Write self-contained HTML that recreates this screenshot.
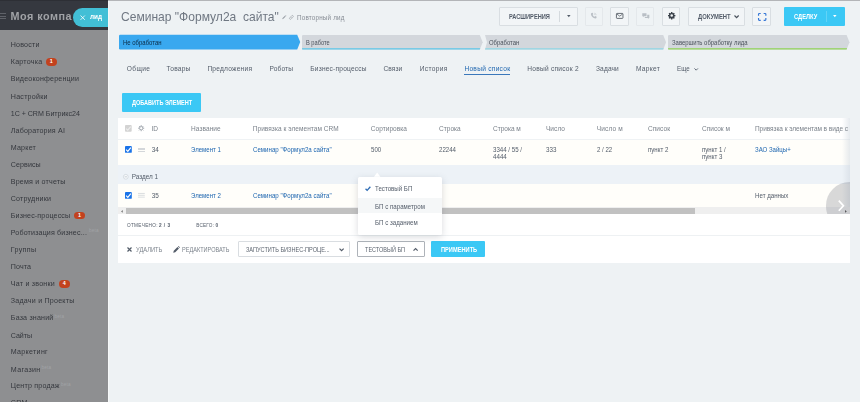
<!DOCTYPE html>
<html lang="ru">
<head>
<meta charset="utf-8">
<title>Семинар "Формул2а сайта"</title>
<style>
html,body{margin:0;padding:0;}
body{width:860px;height:402px;overflow:hidden;background:#eef2f4;font-family:"Liberation Sans",sans-serif;position:relative;}
.a{position:absolute;box-sizing:border-box;}
.t{position:absolute;white-space:pre;font-family:"Liberation Sans",sans-serif;}
svg{position:absolute;overflow:visible;}
.btn{position:absolute;box-sizing:border-box;border:1px solid #d9dee2;background:#f2f5f7;border-radius:1px;}
.btn.dis{border-color:#e4e8eb;background:#eff3f5;}
.badge{position:absolute;background:#c2421e;border-radius:4px;color:#fff;font-size:5.4px;line-height:7.5px;text-align:center;font-weight:700;font-family:"Liberation Sans",sans-serif;}
.beta{position:absolute;font-size:4.7px;line-height:5px;letter-spacing:0.2px;color:#a1a3a6;font-family:"Liberation Sans",sans-serif;}
</style>
</head>
<body>
<!-- domain: Computer-Use -->
<!-- main area top line -->
<div class="a" style="left:0;top:0;width:860px;height:1px;background:#b3b5b8;"></div>

<!-- ===== sidebar ===== -->
<div class="a" style="left:0;top:0;width:108px;height:402px;background:#8e8f91;"></div>
<div class="a" style="left:0;top:0;width:108px;height:30px;background:#35383f;"></div>
<div class="a" style="left:0;top:0;width:108px;height:1px;background:#2d2f35;"></div>
<!-- hamburger -->
<div class="a" style="left:0;top:13px;width:6px;height:1px;background:#5f6269;"></div>
<div class="a" style="left:0;top:15.5px;width:6px;height:1px;background:#5f6269;"></div>
<div class="a" style="left:0;top:18px;width:6px;height:1px;background:#5f6269;"></div>
<!-- lid tab -->
<div class="a" style="left:72.5px;top:8.3px;width:35.5px;height:18.5px;background:#42bfd6;border-radius:9.25px 0 0 9.25px;"></div>
<svg style="left:79.5px;top:14.6px" width="5.4" height="5.4" viewBox="0 0 10 10"><path d="M1 1L9 9M9 1L1 9" stroke="#fff" stroke-width="1.5" fill="none"/></svg>
<!-- badges -->
<div class="badge" style="left:45.5px;top:58.4px;width:11.6px;height:7.5px;">1</div>
<div class="badge" style="left:73.7px;top:211.9px;width:11.5px;height:7.5px;">1</div>
<div class="badge" style="left:58.6px;top:280.1px;width:11.5px;height:7.5px;">4</div>
<div class="beta" style="left:89px;top:228.3px;">beta</div>
<div class="beta" style="left:54.4px;top:313.9px;">beta</div>
<div class="beta" style="left:41.4px;top:364.7px;">beta</div>
<div class="beta" style="left:60.9px;top:381.5px;">beta</div>
<!-- slider edge -->
<div class="a" style="left:108px;top:1px;width:1px;height:401px;background:#f6f8f9;"></div>

<!-- ===== header toolbar ===== -->
<!-- pencil + link icons near title -->
<svg style="left:282px;top:15.4px" width="4.4" height="4.4" viewBox="0 0 10 10"><path d="M0.5 9.5L1.3 6.8L6.6 1.5L8.5 3.4L3.2 8.7Z M7.3 0.8L8.1 0L10 1.9L9.2 2.7Z" fill="#9aa0a7"/></svg>
<svg style="left:289.1px;top:15.3px" width="4.8" height="4.8" viewBox="0 0 10 10"><path d="M4.2 5.8a2 2 0 0 1 0-2.8l1.6-1.6a2 2 0 0 1 2.8 2.8l-1 1M5.8 4.2a2 2 0 0 1 0 2.8l-1.6 1.6a2 2 0 0 1-2.8-2.8l1-1" stroke="#9aa0a7" stroke-width="1.4" fill="none"/></svg>

<div class="btn" style="left:498.8px;top:7px;width:78.8px;height:18.6px;"></div>
<div class="a" style="left:559px;top:10.5px;width:1px;height:11.5px;background:#d5dade;"></div>
<svg style="left:566.6px;top:15.2px" width="3.6" height="2.2" viewBox="0 0 8 5"><path d="M0 0H8L4 5Z" fill="#535c69"/></svg>

<div class="btn dis" style="left:584.5px;top:7px;width:18.4px;height:18.6px;"></div>
<svg style="left:590px;top:12.3px" width="7.4" height="7.4" viewBox="0 0 20 20"><path d="M4.5 2.5L7.3 2L9 6L7 7.6C7.8 9.8 10.2 12.2 12.4 13L14 11L18 12.7L17.5 15.5C17.2 16.9 16 17.8 14.6 17.6C8.4 16.8 3.2 11.6 2.4 5.4C2.2 4 3.1 2.8 4.5 2.5Z" fill="#b9bfc5"/><path d="M11.5 3.2a5.5 5.5 0 0 1 5.3 5.3M11.5 6.2a2.6 2.6 0 0 1 2.3 2.3" stroke="#b9bfc5" stroke-width="1.4" fill="none"/></svg>

<div class="btn" style="left:610.3px;top:7px;width:18.3px;height:18.6px;"></div>
<svg style="left:615.8px;top:13.1px" width="7.4" height="5.8" viewBox="0 0 14 11"><rect x="0.8" y="0.8" width="12.4" height="9.4" rx="1.2" fill="none" stroke="#454c55" stroke-width="1.5"/><path d="M1.6 2L7 6L12.4 2" stroke="#454c55" stroke-width="1.3" fill="none"/></svg>

<div class="btn dis" style="left:636.2px;top:7px;width:18.2px;height:18.6px;"></div>
<svg style="left:641.8px;top:12.8px" width="7.6" height="6.6" viewBox="0 0 16 14"><path d="M0.5 0.5H9.5V7H4L2 9V7H0.5Z" fill="#b9bfc5"/><path d="M11 3.5H15.5V10.5H14V12.5L12 10.5H6V8.3H11Z" fill="#b9bfc5"/></svg>

<div class="btn" style="left:662.2px;top:7px;width:18.2px;height:18.6px;"></div>
<svg style="left:668.1px;top:12.2px" width="7.4" height="7.4" viewBox="0 0 20 20"><path fill="#3b424b" fill-rule="evenodd" d="M8.3 0.8h3.4l0.5 2.6 1.5 0.6 2.2-1.5 2.4 2.4-1.5 2.2 0.6 1.5 2.6 0.5v3.4l-2.6 0.5-0.6 1.5 1.5 2.2-2.4 2.4-2.2-1.5-1.5 0.6-0.5 2.6H8.3l-0.5-2.6-1.5-0.6-2.2 1.5-2.4-2.4 1.5-2.2-0.6-1.5L0 12.5V9.1l2.6-0.5 0.6-1.5L1.7 4.9l2.4-2.4 2.2 1.5 1.5-0.6z M10 6.9a3.5 3.5 0 1 0 0 7a3.5 3.5 0 1 0 0-7z" transform="translate(0 -0.8)"/></svg>

<div class="btn" style="left:688px;top:7px;width:56.6px;height:18.6px;"></div>
<svg style="left:734px;top:15px" width="5.2" height="3.2" viewBox="0 0 10 6"><path d="M1 1L5 5L9 1" stroke="#4b535e" stroke-width="2.4" fill="none"/></svg>

<div class="btn" style="left:752.3px;top:7px;width:18.7px;height:18.6px;"></div>
<svg style="left:757.6px;top:12.5px" width="8.4" height="7.8" viewBox="0 0 17 16"><path d="M1 5.5V2.5Q1 1 2.5 1H5.5 M11.5 1H14.5Q16 1 16 2.5V5.5 M16 10.5V13.5Q16 15 14.5 15H11.5 M5.5 15H2.5Q1 15 1 13.5V10.5" stroke="#3677d6" stroke-width="2.4" fill="none"/></svg>

<div class="a" style="left:784px;top:7px;width:61px;height:18.6px;background:#3bc8f5;border-radius:1px;"></div>
<div class="a" style="left:825.9px;top:10.5px;width:1px;height:11.5px;background:#62d3f7;"></div>
<svg style="left:833.3px;top:15.2px" width="3.6" height="2.2" viewBox="0 0 8 5"><path d="M0 0H8L4 5Z" fill="#fff"/></svg>

<!-- ===== stage bar ===== -->
<svg style="left:0;top:0" width="860" height="60" viewBox="0 0 860 60">
  <path d="M120.2 34.7H297.2L300.2 42L297.2 49.4H120.2Q119 49.4 119 48.2V35.9Q119 34.7 120.2 34.7Z" fill="#39a8ef"/>
  <path d="M303.2 34.9H479.8L482.7 42.2L479.8 49.6H303.2Q302 49.6 302 48.4V36.1Q302 34.9 303.2 34.9Z" fill="#d3d7dc"/>
  <path d="M302 48.3V48.4Q302 49.6 303.2 49.6H479.8L480.3 48.3Z" fill="#5cc6e8"/>
  <path d="M485 34.9H663.2L666.1 42.2L663.2 49.6H485L487 42.2Z" fill="#d3d7dc"/>
  <path d="M485.4 48.3H663.7L663.2 49.6H485Z" fill="#8fd6e4"/>
  <path d="M669.2 34.9H846.6L849.5 42.2L846.6 49.6H669.2Q668 49.6 668 48.4V36.1Q668 34.9 669.2 34.9Z" fill="#d3d7dc"/>
  <path d="M668 48.3V48.4Q668 49.6 669.2 49.6H846.6L847.1 48.3Z" fill="#8fd256"/>
</svg>

<!-- ===== tabs ===== -->
<div class="a" style="left:464.3px;top:74.1px;width:45.8px;height:1.3px;background:#3a78bb;"></div>
<svg style="left:694.4px;top:67.6px" width="4.4" height="2.6" viewBox="0 0 10 6"><path d="M1 1L5 5L9 1" stroke="#535c69" stroke-width="2.1" fill="none"/></svg>

<!-- add button -->
<div class="a" style="left:122.2px;top:93px;width:79.2px;height:18.9px;background:#3bc8f5;border-radius:1px;"></div>

<!-- ===== grid panel ===== -->
<div class="a" style="left:118px;top:118px;width:732px;height:144.8px;background:#fff;"></div>
<div class="a" style="left:118px;top:139px;width:732px;height:1px;background:#eff2f4;"></div>
<div class="a" style="left:118px;top:140px;width:732px;height:25px;background:#fffefa;"></div>
<div class="a" style="left:118px;top:165px;width:732px;height:19px;background:#edf2f7;"></div>
<div class="a" style="left:118px;top:184px;width:732px;height:23px;background:#fffefa;"></div>
<!-- right fade shadow -->
<div class="a" style="left:842px;top:118px;width:8px;height:89.5px;background:linear-gradient(90deg,rgba(215,222,230,0),rgba(205,213,222,0.5));"></div>
<!-- scrollbar -->
<div class="a" style="left:118px;top:207px;width:732px;height:7px;background:#efefef;"></div>
<div class="a" style="left:126px;top:208px;width:569px;height:6px;background:#c1c1c1;"></div>
<svg style="left:121.4px;top:209.6px" width="1.8" height="2.8" viewBox="0 0 4 6"><path d="M4 0V6L0 3Z" fill="#7a7a7a"/></svg>
<svg style="left:845.2px;top:209.6px" width="1.8" height="2.8" viewBox="0 0 4 6"><path d="M0 0V6L4 3Z" fill="#4a4a4a"/></svg>
<!-- next arrow semicircle -->
<div class="a" style="left:818px;top:118px;width:32px;height:96px;overflow:hidden;">
  <div class="a" style="left:8.4px;top:64.4px;width:47.2px;height:47.2px;border-radius:50%;background:rgba(125,130,138,0.3);"></div>
</div>
<svg style="left:837.8px;top:199.8px" width="6.2" height="11.4" viewBox="0 0 6.2 11.4"><path d="M0.8 0.6L5.4 5.7L0.8 10.8" stroke="#fff" stroke-width="1.7" fill="none"/></svg>

<!-- header icons -->
<svg style="left:125.1px;top:124.9px" width="6.7" height="6.7" viewBox="0 0 6.8 6.8"><rect width="6.8" height="6.8" rx="0.9" fill="#d3d3d3"/><path d="M1.1 3.7L2.8 5.3L5.8 1.7" stroke="#ededed" stroke-width="1.1" fill="none"/></svg>
<svg style="left:137.9px;top:125.2px" width="6.4" height="6.4" viewBox="0 0 20 20"><g fill="none" stroke="#9aa0a8"><circle cx="10" cy="10" r="5.2" stroke-width="2.6"/><path d="M10 0.6V4M10 16V19.4M0.6 10H4M16 10H19.4M3.35 3.35L5.8 5.8M14.2 14.2L16.65 16.65M16.65 3.35L14.2 5.8M5.8 14.2L3.35 16.65" stroke-width="3"/></g></svg>

<!-- row 1 icons -->
<svg style="left:125.1px;top:146.3px" width="6.8" height="6.8" viewBox="0 0 6.8 6.8"><rect width="6.8" height="6.8" rx="0.9" fill="#1a73e8"/><path d="M1.1 3.7L2.8 5.3L5.8 1.7" stroke="#fff" stroke-width="1.15" fill="none"/></svg>
<div class="a" style="left:138px;top:147.7px;width:6.6px;height:0.9px;background:#d4d7da;"></div>
<div class="a" style="left:138px;top:149.4px;width:6.6px;height:0.9px;background:#d4d7da;"></div>
<div class="a" style="left:138px;top:151.1px;width:6.6px;height:0.9px;background:#d4d7da;"></div>
<!-- section row icon -->
<svg style="left:122.7px;top:173.9px" width="5.6" height="5.6" viewBox="0 0 10 10"><circle cx="5" cy="5" r="4.3" fill="#f7f9fb" stroke="#ccd3da" stroke-width="1.2"/><path d="M2.9 5H7.1" stroke="#b3bbc4" stroke-width="1.2"/></svg>
<!-- row 2 icons -->
<svg style="left:125.1px;top:191.8px" width="6.8" height="6.8" viewBox="0 0 6.8 6.8"><rect width="6.8" height="6.8" rx="0.9" fill="#1a73e8"/><path d="M1.1 3.7L2.8 5.3L5.8 1.7" stroke="#fff" stroke-width="1.15" fill="none"/></svg>
<svg style="left:138px;top:193px" width="6.8" height="4.6" viewBox="0 0 6.8 4.6"><path d="M0 0.45H6.8M0 2.3H6.8M0 4.15H6.8" stroke="#d2d5d9" stroke-width="0.8" fill="none"/></svg>

<!-- footer divider -->
<div class="a" style="left:118px;top:235px;width:732px;height:1px;background:#eef1f3;"></div>
<!-- action icons -->
<svg style="left:127.4px;top:247.1px" width="5" height="5" viewBox="0 0 10 10"><path d="M1 1L9 9M9 1L1 9" stroke="#535c69" stroke-width="2.4" fill="none"/></svg>
<svg style="left:172.8px;top:246.2px" width="7" height="7" viewBox="0 0 10 10"><path d="M0.3 9.7L1.1 6.8L6.4 1.5L8.5 3.6L3.2 8.9Z M7.1 0.8L7.9 0L10 2.1L9.2 2.9Z" fill="#535c69"/></svg>
<!-- dropdown 1 -->
<div class="a" style="left:237.9px;top:241.3px;width:112.4px;height:16.2px;border:1px solid #d9dde1;background:#fff;border-radius:1px;"></div>
<svg style="left:339.1px;top:248.2px" width="5.2" height="3.2" viewBox="0 0 10 6"><path d="M1 1L5 5L9 1" stroke="#535c69" stroke-width="2.3" fill="none"/></svg>
<!-- dropdown 2 -->
<div class="a" style="left:357.3px;top:241.3px;width:67.4px;height:16.2px;border:1px solid #aeb3b9;background:#fff;border-radius:1px;"></div>
<svg style="left:412.7px;top:248px" width="5.2" height="3.2" viewBox="0 0 10 6"><path d="M1 5L5 1L9 5" stroke="#535c69" stroke-width="2.3" fill="none"/></svg>
<!-- apply -->
<div class="a" style="left:431.4px;top:241.3px;width:53.8px;height:16.2px;background:#3bc8f5;border-radius:1px;"></div>

<!-- ===== popup ===== -->
<div class="a" style="left:357.8px;top:177px;width:84.2px;height:58.3px;background:#fff;border-radius:1.5px;box-shadow:0 2px 7px rgba(83,92,105,0.22);z-index:20;"></div>
<svg style="left:373.6px;top:172.4px;z-index:21" width="6.4" height="4.8" viewBox="0 0 6.4 4.8"><path d="M0 4.8L3.2 0.6L6.4 4.8Z" fill="#fff"/></svg>
<div class="a" style="left:357.8px;top:198.3px;width:84.2px;height:15px;background:#f5f7f8;z-index:22;"></div>
<svg style="left:364.9px;top:186.4px;z-index:23" width="5.9" height="5.2" viewBox="0 0 11 9.7"><path d="M1 5.2L4 8.2L10 1.4" stroke="#2f6db5" stroke-width="2.5" fill="none"/></svg>

<div style="position:absolute;left:0;top:0;width:860px;height:402px;z-index:40;will-change:transform;">
<span class="t" style="left:10.8px;top:41.18px;font-size:7.1px;line-height:9.23px;color:#34373d;letter-spacing:0.189px;">Новости</span>
<span class="t" style="left:10.8px;top:58.23px;font-size:7.1px;line-height:9.23px;color:#34373d;letter-spacing:0.224px;">Карточка</span>
<span class="t" style="left:10.8px;top:75.28px;font-size:7.1px;line-height:9.23px;color:#34373d;letter-spacing:0.189px;">Видеоконференции</span>
<span class="t" style="left:10.8px;top:92.84px;font-size:7.1px;line-height:9.23px;color:#34373d;letter-spacing:0.238px;">Настройки</span>
<span class="t" style="left:10.8px;top:110.16px;font-size:7.1px;line-height:9.23px;color:#34373d;letter-spacing:-0.035px;">1С + CRM Битрикс24</span>
<span class="t" style="left:10.8px;top:127.04px;font-size:7.1px;line-height:9.23px;color:#34373d;letter-spacing:0.17px;">Лаборатория AI</span>
<span class="t" style="left:10.8px;top:144.04px;font-size:7.1px;line-height:9.23px;color:#34373d;letter-spacing:0.194px;">Маркет</span>
<span class="t" style="left:10.8px;top:160.53px;font-size:7.1px;line-height:9.23px;color:#34373d;letter-spacing:0.085px;">Сервисы</span>
<span class="t" style="left:10.8px;top:177.58px;font-size:7.1px;line-height:9.23px;color:#34373d;letter-spacing:0.196px;">Время и отчеты</span>
<span class="t" style="left:10.8px;top:194.63px;font-size:7.1px;line-height:9.23px;color:#34373d;letter-spacing:0.196px;">Сотрудники</span>
<span class="t" style="left:10.8px;top:211.68px;font-size:7.1px;line-height:9.23px;color:#34373d;letter-spacing:0.129px;">Бизнес-процессы</span>
<span class="t" style="left:10.8px;top:228.73px;font-size:7.1px;line-height:9.23px;color:#34373d;letter-spacing:0.151px;">Роботизация бизнес...</span>
<span class="t" style="left:10.8px;top:245.78px;font-size:7.1px;line-height:9.23px;color:#34373d;letter-spacing:0.312px;">Группы</span>
<span class="t" style="left:10.8px;top:262.83px;font-size:7.1px;line-height:9.23px;color:#34373d;letter-spacing:0.124px;">Почта</span>
<span class="t" style="left:10.8px;top:279.88px;font-size:7.1px;line-height:9.23px;color:#34373d;letter-spacing:0.223px;">Чат и звонки</span>
<span class="t" style="left:10.8px;top:296.93px;font-size:7.1px;line-height:9.23px;color:#34373d;letter-spacing:0.221px;">Задачи и Проекты</span>
<span class="t" style="left:10.8px;top:313.98px;font-size:7.1px;line-height:9.23px;color:#34373d;letter-spacing:0.184px;">База знаний</span>
<span class="t" style="left:10.8px;top:331.55px;font-size:7.1px;line-height:9.23px;color:#34373d;letter-spacing:-0.067px;">Сайты</span>
<span class="t" style="left:10.8px;top:348.08px;font-size:7.1px;line-height:9.23px;color:#34373d;letter-spacing:0.3px;">Маркетинг</span>
<span class="t" style="left:10.8px;top:365.54px;font-size:7.1px;line-height:9.23px;color:#34373d;letter-spacing:0.354px;">Магазин</span>
<span class="t" style="left:10.8px;top:382.18px;font-size:7.1px;line-height:9.23px;color:#34373d;letter-spacing:0.192px;">Центр продаж</span>
<span class="t" style="left:10.8px;top:398.83px;font-size:7.1px;line-height:9.23px;color:#34373d;letter-spacing:0.272px;">CRM</span>
<span class="t" style="left:10.5px;top:8.74px;font-size:10.8px;line-height:14.04px;color:#a0a2a6;font-weight:700;letter-spacing:0.502px;">Моя компа</span>
<span class="t" style="left:90px;top:13.39px;font-size:6.4px;line-height:8.32px;color:#ffffff;font-weight:700;letter-spacing:-0.023px;">лид</span>
<span class="t" style="left:120.6px;top:8.74px;font-size:12.4px;line-height:16.12px;color:#6f7782;transform:scaleX(0.9725);transform-origin:0 50%;">Семинар &quot;Формул2а  сайта&quot;</span>
<span class="t" style="left:297px;top:14.05px;font-size:6.3px;line-height:8.19px;color:#878d95;letter-spacing:0.191px;">Повторный лид</span>
<span class="t" style="left:508.6px;top:12.7px;font-size:6.5px;line-height:8.45px;color:#535c69;font-weight:700;transform:scaleX(0.872);transform-origin:0 50%;">РАСШИРЕНИЯ</span>
<span class="t" style="left:697.8px;top:12.7px;font-size:6.5px;line-height:8.45px;color:#535c69;font-weight:700;transform:scaleX(0.8985);transform-origin:0 50%;">ДОКУМЕНТ</span>
<span class="t" style="left:794px;top:12.7px;font-size:6.5px;line-height:8.45px;color:#ffffff;font-weight:700;transform:scaleX(0.8817);transform-origin:0 50%;">СДЕЛКУ</span>
<span class="t" style="left:122.5px;top:39.15px;font-size:6.3px;line-height:8.19px;color:#0b2b45;transform:scaleX(0.9462);transform-origin:0 50%;">Не обработан</span>
<span class="t" style="left:305.8px;top:39.15px;font-size:6.3px;line-height:8.19px;color:#4b525c;transform:scaleX(0.9029);transform-origin:0 50%;">В работе</span>
<span class="t" style="left:488.8px;top:39.15px;font-size:6.3px;line-height:8.19px;color:#4b525c;transform:scaleX(0.9355);transform-origin:0 50%;">Обработан</span>
<span class="t" style="left:672px;top:39.15px;font-size:6.3px;line-height:8.19px;color:#4b525c;transform:scaleX(0.9421);transform-origin:0 50%;">Завершить обработку лида</span>
<span class="t" style="left:126.8px;top:64.57px;font-size:6.6px;line-height:8.58px;color:#535c69;letter-spacing:0.353px;">Общие</span>
<span class="t" style="left:166.6px;top:64.57px;font-size:6.6px;line-height:8.58px;color:#535c69;letter-spacing:0.203px;">Товары</span>
<span class="t" style="left:207.4px;top:64.57px;font-size:6.6px;line-height:8.58px;color:#535c69;letter-spacing:0.233px;">Предложения</span>
<span class="t" style="left:269.5px;top:64.57px;font-size:6.6px;line-height:8.58px;color:#535c69;letter-spacing:0.111px;">Роботы</span>
<span class="t" style="left:310.3px;top:64.57px;font-size:6.6px;line-height:8.58px;color:#535c69;letter-spacing:0.196px;">Бизнес-процессы</span>
<span class="t" style="left:383.5px;top:64.57px;font-size:6.6px;line-height:8.58px;color:#535c69;letter-spacing:0.083px;">Связи</span>
<span class="t" style="left:419.7px;top:64.57px;font-size:6.6px;line-height:8.58px;color:#535c69;letter-spacing:0.337px;">История</span>
<span class="t" style="left:464.4px;top:64.57px;font-size:6.6px;line-height:8.58px;color:#2067b0;letter-spacing:0.275px;">Новый список</span>
<span class="t" style="left:527.3px;top:64.57px;font-size:6.6px;line-height:8.58px;color:#535c69;letter-spacing:0.241px;">Новый список 2</span>
<span class="t" style="left:596px;top:64.57px;font-size:6.6px;line-height:8.58px;color:#535c69;letter-spacing:0.132px;">Задачи</span>
<span class="t" style="left:635.9px;top:64.57px;font-size:6.6px;line-height:8.58px;color:#535c69;letter-spacing:0.294px;">Маркет</span>
<span class="t" style="left:676.8px;top:64.57px;font-size:6.6px;line-height:8.58px;color:#535c69;transform:scaleX(0.9462);transform-origin:0 50%;">Еще</span>
<span class="t" style="left:132.3px;top:99.06px;font-size:6.4px;line-height:8.32px;color:#ffffff;font-weight:700;transform:scaleX(0.8709);transform-origin:0 50%;">ДОБАВИТЬ ЭЛЕМЕНТ</span>
<span class="t" style="left:151.5px;top:124.73px;font-size:6.5px;line-height:8.45px;color:#7b828b;letter-spacing:0.0px;">ID</span>
<span class="t" style="left:191.1px;top:124.73px;font-size:6.5px;line-height:8.45px;color:#7b828b;letter-spacing:0.065px;">Название</span>
<span class="t" style="left:252.8px;top:124.73px;font-size:6.5px;line-height:8.45px;color:#7b828b;letter-spacing:0.051px;">Привязка к элементам CRM</span>
<span class="t" style="left:370.7px;top:124.73px;font-size:6.5px;line-height:8.45px;color:#7b828b;letter-spacing:0.068px;">Сортировка</span>
<span class="t" style="left:439px;top:124.73px;font-size:6.5px;line-height:8.45px;color:#7b828b;letter-spacing:0.037px;">Строка</span>
<span class="t" style="left:493px;top:124.73px;font-size:6.5px;line-height:8.45px;color:#7b828b;letter-spacing:0.003px;">Строка м</span>
<span class="t" style="left:545.9px;top:124.73px;font-size:6.5px;line-height:8.45px;color:#7b828b;letter-spacing:0.099px;">Число</span>
<span class="t" style="left:596.8px;top:124.73px;font-size:6.5px;line-height:8.45px;color:#7b828b;letter-spacing:0.139px;">Число м</span>
<span class="t" style="left:648px;top:124.73px;font-size:6.5px;line-height:8.45px;color:#7b828b;letter-spacing:0.072px;">Список</span>
<span class="t" style="left:702px;top:124.73px;font-size:6.5px;line-height:8.45px;color:#7b828b;letter-spacing:0.013px;">Список м</span>
<span class="t" style="left:755px;top:124.73px;font-size:6.5px;line-height:8.45px;color:#7b828b;letter-spacing:-0.061px;">Привязка к элементам в виде с</span>
<span class="t" style="left:151.7px;top:146.29px;font-size:6.4px;line-height:8.32px;color:#535c69;letter-spacing:-0.109px;">34</span>
<span class="t" style="left:191.1px;top:146.29px;font-size:6.4px;line-height:8.32px;color:#2067b0;transform:scaleX(0.952);transform-origin:0 50%;">Элемент 1</span>
<span class="t" style="left:252.8px;top:146.29px;font-size:6.4px;line-height:8.32px;color:#2067b0;transform:scaleX(0.9607);transform-origin:0 50%;">Семинар &quot;Формул2а сайта&quot;</span>
<span class="t" style="left:370.7px;top:146.29px;font-size:6.4px;line-height:8.32px;color:#535c69;transform:scaleX(0.9558);transform-origin:0 50%;">500</span>
<span class="t" style="left:439px;top:146.29px;font-size:6.4px;line-height:8.32px;color:#535c69;transform:scaleX(0.9561);transform-origin:0 50%;">22244</span>
<span class="t" style="left:493px;top:146.29px;font-size:6.4px;line-height:8.32px;color:#535c69;transform:scaleX(0.9602);transform-origin:0 50%;">3344 / 55 /</span>
<span class="t" style="left:493px;top:153.19px;font-size:6.4px;line-height:8.32px;color:#535c69;transform:scaleX(0.9705);transform-origin:0 50%;">4444</span>
<span class="t" style="left:545.9px;top:146.29px;font-size:6.4px;line-height:8.32px;color:#535c69;transform:scaleX(0.9745);transform-origin:0 50%;">333</span>
<span class="t" style="left:596.8px;top:146.29px;font-size:6.4px;line-height:8.32px;color:#535c69;transform:scaleX(0.95);transform-origin:0 50%;">2 / 22</span>
<span class="t" style="left:648px;top:146.29px;font-size:6.4px;line-height:8.32px;color:#535c69;transform:scaleX(0.9572);transform-origin:0 50%;">пункт 2</span>
<span class="t" style="left:702px;top:146.29px;font-size:6.4px;line-height:8.32px;color:#535c69;transform:scaleX(0.9528);transform-origin:0 50%;">пункт 1 /</span>
<span class="t" style="left:702px;top:153.19px;font-size:6.4px;line-height:8.32px;color:#535c69;transform:scaleX(0.9572);transform-origin:0 50%;">пункт 3</span>
<span class="t" style="left:755px;top:146.29px;font-size:6.4px;line-height:8.32px;color:#2067b0;transform:scaleX(0.9469);transform-origin:0 50%;">ЗАО Зайцы+</span>
<span class="t" style="left:131.8px;top:172.79px;font-size:6.4px;line-height:8.32px;color:#535c69;letter-spacing:-0.022px;">Раздел 1</span>
<span class="t" style="left:151.7px;top:191.99px;font-size:6.4px;line-height:8.32px;color:#535c69;letter-spacing:-0.109px;">35</span>
<span class="t" style="left:191.1px;top:191.99px;font-size:6.4px;line-height:8.32px;color:#2067b0;transform:scaleX(0.952);transform-origin:0 50%;">Элемент 2</span>
<span class="t" style="left:252.8px;top:191.99px;font-size:6.4px;line-height:8.32px;color:#2067b0;transform:scaleX(0.9607);transform-origin:0 50%;">Семинар &quot;Формул2а сайта&quot;</span>
<span class="t" style="left:755px;top:191.99px;font-size:6.4px;line-height:8.32px;color:#535c69;transform:scaleX(0.9599);transform-origin:0 50%;">Нет данных</span>
<span class="t" style="left:127px;top:223.1px;font-size:4.7px;line-height:6.11px;color:#535c69;letter-spacing:0.297px;">ОТМЕЧЕНО:</span>
<span class="t" style="left:159px;top:223.1px;font-size:4.7px;line-height:6.11px;color:#535c69;font-weight:700;letter-spacing:0.469px;">2 / 3</span>
<span class="t" style="left:196.3px;top:223.1px;font-size:4.7px;line-height:6.11px;color:#535c69;letter-spacing:0.196px;">ВСЕГО:</span>
<span class="t" style="left:215.5px;top:223.1px;font-size:4.7px;line-height:6.11px;color:#535c69;font-weight:700;letter-spacing:0px;">0</span>
<span class="t" style="left:135.6px;top:245.6px;font-size:6.3px;line-height:8.19px;color:#7d848d;transform:scaleX(0.9113);transform-origin:0 50%;">УДАЛИТЬ</span>
<span class="t" style="left:182.4px;top:245.6px;font-size:6.3px;line-height:8.19px;color:#7d848d;transform:scaleX(0.8852);transform-origin:0 50%;">РЕДАКТИРОВАТЬ</span>
<span class="t" style="left:246.4px;top:245.6px;font-size:6.3px;line-height:8.19px;color:#5c646f;transform:scaleX(0.8851);transform-origin:0 50%;">ЗАПУСТИТЬ БИЗНЕС-ПРОЦЕ...</span>
<span class="t" style="left:365.2px;top:245.6px;font-size:6.3px;line-height:8.19px;color:#5c646f;transform:scaleX(0.8779);transform-origin:0 50%;">ТЕСТОВЫЙ БП</span>
<span class="t" style="left:440.8px;top:245.6px;font-size:6.3px;line-height:8.19px;color:#ffffff;font-weight:700;transform:scaleX(0.9015);transform-origin:0 50%;">ПРИМЕНИТЬ</span>
<span class="t" style="left:375.3px;top:185.03px;font-size:6.5px;line-height:8.45px;color:#535c69;transform:scaleX(0.9443);transform-origin:0 50%;z-index:30;">Тестовый БП</span>
<span class="t" style="left:375.3px;top:202.73px;font-size:6.5px;line-height:8.45px;color:#535c69;transform:scaleX(0.9465);transform-origin:0 50%;z-index:30;">БП с параметром</span>
<span class="t" style="left:375.3px;top:219.11px;font-size:6.5px;line-height:8.45px;color:#535c69;transform:scaleX(0.9466);transform-origin:0 50%;z-index:30;">БП с заданием</span>
</div>
</body>
</html>
